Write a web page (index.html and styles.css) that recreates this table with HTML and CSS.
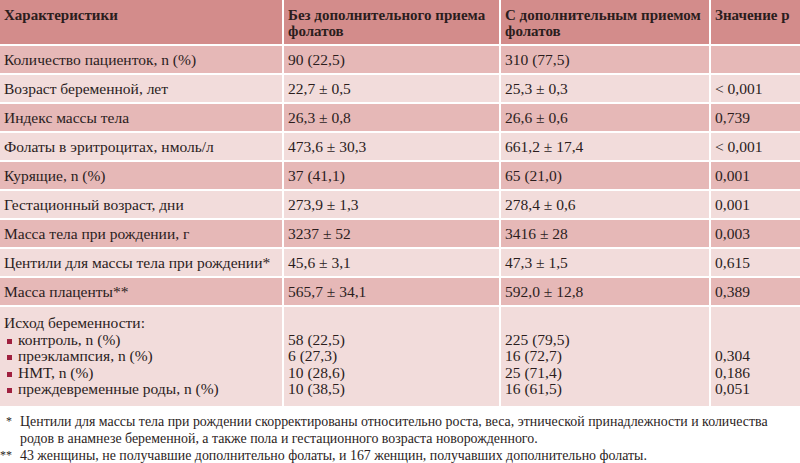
FILE: index.html
```html
<!DOCTYPE html>
<html lang="ru">
<head>
<meta charset="utf-8">
<link rel="stylesheet" href="styles.css">
</head>
<body>
<table class="data">
  <colgroup>
    <col class="c1"><col class="c2"><col class="c3"><col class="c4">
  </colgroup>
  <thead>
    <tr class="head">
      <th>Характеристики</th>
      <th>Без дополнительного приема фолатов</th>
      <th>С дополнительным приемом фолатов</th>
      <th>Значение р</th>
    </tr>
  </thead>
  <tbody>
    <tr class="dark"><td>Количество пациенток, n (%)</td><td>90 (22,5)</td><td>310 (77,5)</td><td></td></tr>
    <tr class="light"><td>Возраст беременной, лет</td><td>22,7 ± 0,5</td><td>25,3 ± 0,3</td><td>&lt; 0,001</td></tr>
    <tr class="dark"><td>Индекс массы тела</td><td>26,3 ± 0,8</td><td>26,6 ± 0,6</td><td>0,739</td></tr>
    <tr class="light"><td>Фолаты в эритроцитах, нмоль/л</td><td>473,6 ± 30,3</td><td>661,2 ± 17,4</td><td>&lt; 0,001</td></tr>
    <tr class="dark"><td>Курящие, n (%)</td><td>37 (41,1)</td><td>65 (21,0)</td><td>0,001</td></tr>
    <tr class="light"><td>Гестационный возраст, дни</td><td>273,9 ± 1,3</td><td>278,4 ± 0,6</td><td>0,001</td></tr>
    <tr class="dark"><td>Масса тела при рождении, г</td><td>3237 ± 52</td><td>3416 ± 28</td><td>0,003</td></tr>
    <tr class="light"><td>Центили для массы тела при рождении*</td><td>45,6 ± 3,1</td><td>47,3 ± 1,5</td><td>0,615</td></tr>
    <tr class="dark"><td>Масса плаценты**</td><td>565,7 ± 34,1</td><td>592,0 ± 12,8</td><td>0,389</td></tr>
    <tr class="light multi">
      <td>
        <div class="line">Исход беременности:</div>
        <div class="line bul">контроль, n (%)</div>
        <div class="line bul">преэклампсия, n (%)</div>
        <div class="line bul">НМТ, n (%)</div>
        <div class="line bul">преждевременные роды, n (%)</div>
      </td>
      <td>
        <div class="line">&nbsp;</div>
        <div class="line">58 (22,5)</div>
        <div class="line">6 (27,3)</div>
        <div class="line">10 (28,6)</div>
        <div class="line">10 (38,5)</div>
      </td>
      <td>
        <div class="line">&nbsp;</div>
        <div class="line">225 (79,5)</div>
        <div class="line">16 (72,7)</div>
        <div class="line">25 (71,4)</div>
        <div class="line">16 (61,5)</div>
      </td>
      <td>
        <div class="line">&nbsp;</div>
        <div class="line">&nbsp;</div>
        <div class="line">0,304</div>
        <div class="line">0,186</div>
        <div class="line">0,051</div>
      </td>
    </tr>
  </tbody>
</table>
<div class="notes">
  <div class="note"><span class="mark">*</span><span class="ntext">Центили для массы тела при рождении скорректированы относительно роста, веса, этнической принадлежности и количества родов в анамнезе беременной, а также пола и гестационного возраста новорожденного.</span></div>
  <div class="note"><span class="mark">**</span><span class="ntext">43 женщины, не получавшие дополнительно фолаты, и 167 женщин, получавших дополнительно фолаты.</span></div>
</div>
</body>
</html>
```

FILE: styles.css
```css
html, body {
  margin: 0;
  padding: 0;
  background: #ffffff;
}
body {
  width: 800px;
  height: 463px;
  overflow: hidden;
  font-family: "Liberation Serif", "DejaVu Serif", serif;
  color: #2b1d1d;
}
.data {
  width: 800px;
  border-collapse: collapse;
  table-layout: fixed;
}
.c1 { width: 283px; }
.c2 { width: 217px; }
.c3 { width: 210px; }
.c4 { width: 90px; }

.data th, .data td {
  text-align: left;
  vertical-align: middle;
  padding: 0 4px;
  border-right: 2px solid #ffffff;
  border-bottom: 2px solid #ffffff;
  font-size: 15.5px;
  line-height: 16px;
}
.data th:last-child, .data td:last-child {
  border-right: none;
}
.head th {
  background: #d38c8b;
  font-weight: bold;
  height: 45px;
  vertical-align: top;
  padding-top: 7px;
  padding-bottom: 0;
  box-sizing: border-box;
  font-size: 15px;
}
.dark td { background: #e6b8b7; }
.light td { background: #f2dcdb; }
.data tbody tr td { height: 27px; }
.multi td {
  vertical-align: top;
  padding-top: 8px;
  padding-bottom: 8px;
}
.line {
  line-height: 16.5px;
  height: 16.5px;
  white-space: nowrap;
}
.bul {
  position: relative;
  padding-left: 14px;
}
.bul::before {
  content: "";
  position: absolute;
  left: 3px;
  top: 7px;
  width: 5px;
  height: 5px;
  background: #a0203f;
}
.notes {
  padding-top: 5px;
  font-size: 13.9px;
  line-height: 17px;
}
.note {
  display: flex;
}
.mark {
  width: 20px;
  flex: none;
  text-align: right;
  padding-right: 8px;
  box-sizing: border-box;
  font-size: 12px;
}
.ntext {
  flex: 1;
  padding-right: 10px;
}
```
